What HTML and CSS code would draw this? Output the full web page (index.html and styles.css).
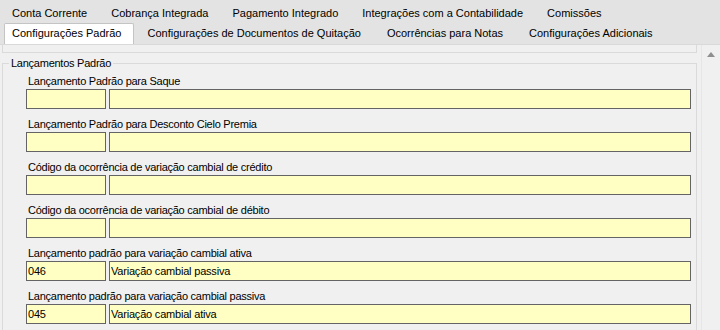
FILE: index.html
```html
<!DOCTYPE html>
<html lang="pt-BR">
<head>
    <meta charset="UTF-8">
    <title>Configurações</title>
    <link rel="stylesheet" href="styles.css">
</head>
<body>
    <div class="tabs">
        <div class="tab-row">
            <span class="tab">Conta Corrente</span>
            <span class="tab">Cobrança Integrada</span>
            <span class="tab">Pagamento Integrado</span>
            <span class="tab">Integrações com a Contabilidade</span>
            <span class="tab">Comissões</span>
        </div>
        <div class="tab-row row-front">
            <span class="tab active">Configurações Padrão</span>
            <span class="tab">Configurações de Documentos de Quitação</span>
            <span class="tab">Ocorrências para Notas</span>
            <span class="tab">Configurações Adicionais</span>
        </div>
    </div>

    <div class="page">
        <div class="scroll-area">
            <div class="prev-box"></div>

            <fieldset class="group">
                <legend>Lançamentos Padrão</legend>

                <div class="fields">
                    <div class="field">
                        <label>Lançamento Padrão para Saque</label>
                        <div class="inputs">
                            <input type="text" class="code" value="">
                            <input type="text" class="desc" value="">
                        </div>
                    </div>

                    <div class="field">
                        <label>Lançamento Padrão para Desconto Cielo Premia</label>
                        <div class="inputs">
                            <input type="text" class="code" value="">
                            <input type="text" class="desc" value="">
                        </div>
                    </div>

                    <div class="field">
                        <label>Código da ocorrência de variação cambial de crédito</label>
                        <div class="inputs">
                            <input type="text" class="code" value="">
                            <input type="text" class="desc" value="">
                        </div>
                    </div>

                    <div class="field">
                        <label>Código da ocorrência de variação cambial de débito</label>
                        <div class="inputs">
                            <input type="text" class="code" value="">
                            <input type="text" class="desc" value="">
                        </div>
                    </div>

                    <div class="field">
                        <label>Lançamento padrão para variação cambial ativa</label>
                        <div class="inputs">
                            <input type="text" class="code" value="046">
                            <input type="text" class="desc" value="Variação cambial passiva">
                        </div>
                    </div>

                    <div class="field">
                        <label>Lançamento padrão para variação cambial passiva</label>
                        <div class="inputs">
                            <input type="text" class="code" value="045">
                            <input type="text" class="desc" value="Variação cambial ativa">
                        </div>
                    </div>
                </div>
            </fieldset>
        </div>

        <div class="scrollbar">
            <span class="arrow-up"></span>
        </div>
    </div>
</body>
</html>
```

FILE: styles.css
```css
body {
    margin: 0;
    width: 720px;
    height: 330px;
    overflow: hidden;
    background-color: #f0f0f0;
    color: #000;
    font-family: "Liberation Sans", Arial, sans-serif;
    font-size: 11px;
}

.tabs {
    background-color: #e3e3e3;
    padding-top: 3px;
    border-bottom: 1px solid #d9d9d9;
    height: 41px;
}

.tab-row {
    display: flex;
    height: 20px;
    line-height: 20px;
}

.tab {
    padding: 0 12px;
    white-space: nowrap;
}

.row-front {
    height: 21px;
    line-height: 19px;
}

.row-front .tab {
    padding: 0 13px 2px;
    border-top: 1px solid transparent;
}

.row-front .tab.active {
    margin-left: 4px;
    padding: 0 12px 2px 7px;
    background-color: #fff;
    border: 1px solid #c4c4c4;
    border-bottom: none;
    border-radius: 2px 2px 0 0;
}

.page {
    display: flex;
    height: 285px;
}

.scroll-area {
    flex: 1;
    overflow: hidden;
}

.prev-box {
    height: 7px;
    margin: 0 4px 0 2px;
    border: 1px solid #dadada;
    border-top: none;
}

.group {
    margin: 4px 4px 0 2px;
    padding: 5px 5px 0 0;
    border: 1px solid #dadada;
    letter-spacing: -0.25px;
}

.group legend {
    margin-left: 6px;
    padding: 0 2px;
    line-height: 13px;
}

.fields {
    padding-left: 23px;
}

.field {
    margin-bottom: 9px;
}

.field label {
    display: block;
    margin-left: 2px;
    line-height: 13px;
    margin-bottom: 1px;
}

.inputs {
    display: flex;
    gap: 3px;
}

.inputs input {
    box-sizing: border-box;
    height: 20px;
    margin: 0;
    padding: 0 1px;
    border: 1px solid #646464;
    background-color: #ffffc4;
    font-family: "Liberation Sans", Arial, sans-serif;
    font-size: 11px;
    letter-spacing: -0.2px;
    color: #000;
    outline: none;
}

.inputs .code {
    width: 80px;
}

.inputs .desc {
    flex: 1;
}

.scrollbar {
    width: 18px;
    display: flex;
    justify-content: center;
    padding-top: 7px;
    border-left: 1px solid #e6e6e6;
    background-color: #f0f0f0;
}

.arrow-up {
    width: 0;
    height: 0;
    border-left: 4px solid transparent;
    border-right: 4px solid transparent;
    border-bottom: 5px solid #8f8f8f;
}
```
